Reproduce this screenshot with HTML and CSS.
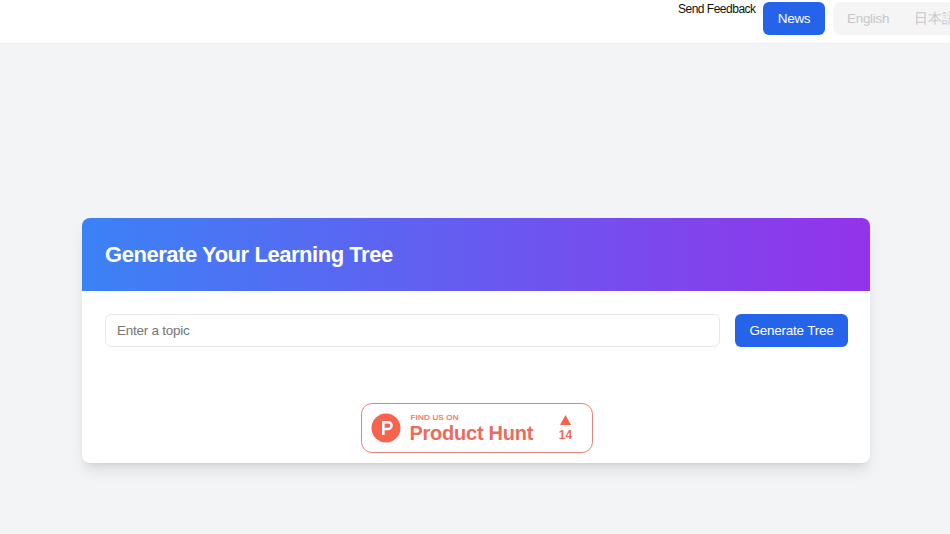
FILE: index.html
```html
<!DOCTYPE html>
<html lang="en">
<head>
<meta charset="utf-8">
<title>Learning Tree</title>
<link rel="stylesheet" href="styles.css">
</head>
<body>
<header class="topbar">
  <a class="feedback" href="#">Send Feedback</a>
  <a class="news" href="#">News</a>
  <div class="langs">
    <span class="lang">English</span>
    <span class="lang">日本語</span>
    <span class="lang">中文</span>
  </div>
</header>
<main class="main">
  <section class="card">
    <div class="card-head">
      <h1 class="title">Generate Your Learning Tree</h1>
    </div>
    <div class="card-body">
      <form class="form">
        <input class="topic" type="text" placeholder="Enter a topic">
        <button class="generate" type="button">Generate Tree</button>
      </form>
      <a class="ph" href="#">
        <svg class="ph-logo" viewBox="0 0 30 30" width="30" height="30" aria-hidden="true">
          <circle cx="15" cy="15" r="14.5" fill="#f8634f"/>
          <path d="M11 8h6.2a4.6 4.6 0 0 1 0 9.2H13.6V22H11zM13.6 10.4v4.4h3.6a2.2 2.2 0 0 0 0-4.4z" fill="#fff" fill-rule="evenodd"/>
        </svg>
        <span class="ph-text">
          <span class="ph-find">FIND US ON</span>
          <span class="ph-name">Product Hunt</span>
        </span>
        <span class="ph-votes">
          <svg class="ph-arrow" viewBox="0 0 11 10" width="11" height="10" aria-hidden="true"><path d="M5.5 0 11 10H0z" fill="#f8634f"/></svg>
          <span class="ph-count">14</span>
        </span>
      </a>
    </div>
  </section>
</main>
</body>
</html>
```
FILE: styles.css
```css
* { box-sizing: border-box; }
html, body { margin: 0; height: 100%; }
body {
  background: #f3f4f6;
  font-family: "Liberation Sans", Arial, sans-serif;
  overflow: hidden;
}
.topbar {
  height: 44px;
  background: #fff;
  border-bottom: 1px solid #eceef1;
  display: flex;
  align-items: flex-start;
  padding: 2px 0 0 678px;
  overflow: hidden;
}
.feedback {
  font-size: 12px;
  letter-spacing: -0.5px;
  line-height: 14px;
  color: #111;
  text-decoration: none;
  white-space: nowrap;
  flex: none;
  width: 78px;
  margin-right: 7px;
}
.news {
  flex: none;
  width: 62px;
  height: 33px;
  line-height: 33px;
  text-align: center;
  background: #2563eb;
  color: #fff;
  font-size: 13.5px;
  letter-spacing: -0.3px;
  border-radius: 6px;
  text-decoration: none;
  margin-right: 8px;
}
.langs {
  flex: none;
  display: flex;
  background: #f5f5f6;
  border-radius: 8px;
  height: 33px;
  padding: 0 14px;
  gap: 25px;
  align-items: center;
  font-size: 13.5px;
  letter-spacing: -0.3px;
  color: #c6c8cc;
}
.main {
  display: flex;
  justify-content: center;
  padding: 174px 0 0 2px;
}
.card {
  width: 788px;
  height: 245px;
  background: #fff;
  border-radius: 8px;
  box-shadow: 0 10px 15px -3px rgba(0,0,0,.1), 0 4px 6px -4px rgba(0,0,0,.1);
  overflow: hidden;
}
.card-head {
  height: 73px;
  display: flex;
  align-items: center;
  padding: 0 23px;
  background: linear-gradient(to right, #3b82f6, #9333ea);
}
.title {
  margin: 0;
  color: #fff;
  font-size: 22px;
  font-weight: 700;
  letter-spacing: -0.45px;
}
.card-body {
  padding: 23px 22px 0 23px;
  display: flex;
  flex-direction: column;
  align-items: center;
}
.form {
  align-self: stretch;
  display: flex;
  gap: 15px;
}
.topic {
  flex: 1;
  min-width: 0;
  height: 33px;
  border: 1px solid #e5e7eb;
  border-radius: 6px;
  padding: 0 11px 1px;
  font: 13.5px "Liberation Sans", Arial, sans-serif;
  letter-spacing: -0.25px;
  color: #111;
  outline: none;
}
.topic::placeholder { color: #757575; opacity: 1; }
.generate {
  flex: none;
  width: 113px;
  height: 33px;
  border: 0;
  border-radius: 6px;
  padding: 0 0 1px;
  background: #2563eb;
  color: #fff;
  font: 13.5px "Liberation Sans", Arial, sans-serif;
  letter-spacing: -0.25px;
}
.ph {
  margin-top: 56px;
  width: 232px;
  height: 50px;
  border: 1px solid #e5857a;
  border-radius: 11px;
  background: #fff;
  display: flex;
  align-items: center;
  padding-left: 9px;
  text-decoration: none;
  color: #ec6b5d;
}
.ph-logo { flex: none; }
.ph-text {
  display: flex;
  flex-direction: column;
  margin-left: 9px;
  width: 149px;
}
.ph-find { font-size: 8px; line-height: 9px; font-weight: 400; padding-left: 1px; letter-spacing: 0.2px; -webkit-text-stroke: 0.2px #ec6b5d; }
.ph-name { font-size: 20px; letter-spacing: -0.25px; line-height: 22px; font-weight: 700; }
.ph-votes {
  display: flex;
  flex-direction: column;
  align-items: center;
  gap: 4px;
  width: 14px;
}
.ph-arrow { flex: none; }
.ph-count { font-size: 12px; line-height: 13px; font-weight: 700; }
```
